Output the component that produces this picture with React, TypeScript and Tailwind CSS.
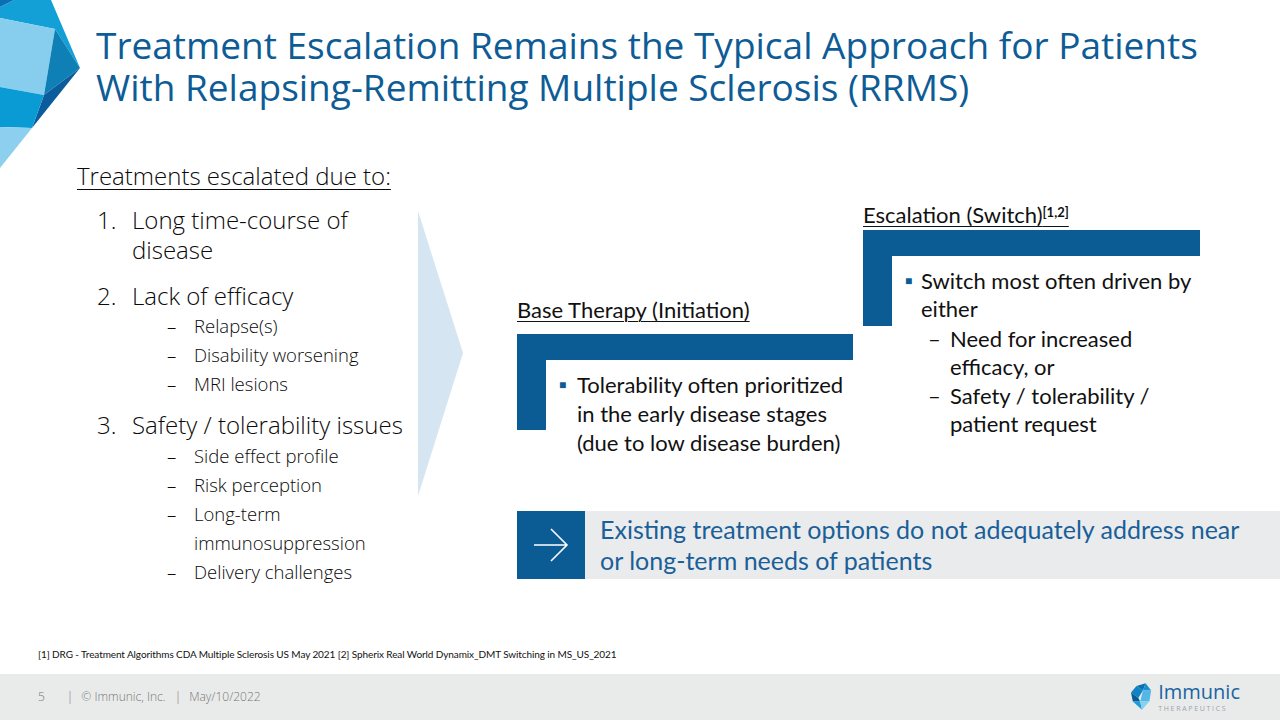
import React from "react";

const BLUE = "text-[#0e5c96]";

function CornerMark() {
  return (
    <svg className="absolute left-0 top-0" width="80" height="170" viewBox="0 0 80 170">
      <polygon points="0,7 14,0 51,0 80,68 55,29 0,18" fill="#12a0d7" />
      <polygon points="0,0 14,0 0,7" fill="#0b6fb1" />
      <polygon points="0,18 55,29 44,95 0,87" fill="#87ceee" />
      <polygon points="55,29 80,68 44,95" fill="#0f80b6" />
      <polygon points="80,68 44,95 32,128" fill="#0a5c9d" />
      <polygon points="0,87 44,95 32,128 0,127" fill="#0b9bd4" />
      <polygon points="0,127 32,128 0,168" fill="#8ccfee" />
    </svg>
  );
}

function FooterLogo() {
  return (
    <div className="flex items-center gap-[5px]">
      <svg width="22" height="30" viewBox="0 0 24 30">
        <polygon points="6,3 16,0 13,8" fill="#0b6fb0" />
        <polygon points="16,0 22,8 13,8" fill="#1a8fcf" />
        <polygon points="0,10 6,3 13,8 8,16" fill="#0f83c4" />
        <polygon points="13,8 22,8 20,20 10,20" fill="#55b7e8" />
        <polygon points="0,10 8,16 10,20 2,20" fill="#0a5a96" />
        <polygon points="2,20 10,20 12,29" fill="#1b9bd8" />
        <polygon points="10,20 20,20 12,29" fill="#86d0f0" />
      </svg>
      <div className="flex flex-col items-start">
        <span className="text-[20px] leading-[20px] text-[#1b64a3] font-['Open_Sans',sans-serif]">Immunic</span>
        <span className="mt-[3px] text-[7px] leading-[8px] tracking-[0.24em] text-[#9aa3ab] font-['Open_Sans',sans-serif]">
          THERAPEUTICS
        </span>
      </div>
    </div>
  );
}

function Sub({ children }: { children: React.ReactNode }) {
  return (
    <li className="flex">
      <span className="w-[27px] shrink-0">–</span>
      <span>{children}</span>
    </li>
  );
}

function Item({ n, mt, children }: { n: string; mt: string; children: React.ReactNode }) {
  return (
    <li className={`flex text-[24px] leading-[30px] ${mt}`}>
      <span className="w-[35px] shrink-0">{n}</span>
      <span>{children}</span>
    </li>
  );
}

function LBlock({ children, pt }: { children: React.ReactNode; pt: string }) {
  return (
    <div>
      <div className="h-[26px] bg-[#0b5b94]" />
      <div className="flex items-start">
        <div className="w-[29px] h-[70px] shrink-0 bg-[#0b5b94]" />
        <div className={`pl-[13px] ${pt}`}>{children}</div>
      </div>
    </div>
  );
}

export default function App() {
  return (
    <div className="relative w-[1280px] h-[720px] bg-white overflow-hidden flex flex-col">
      <CornerMark />

      <h1 className={`pl-[96px] pt-[24px] text-[37px] leading-[42px] ${BLUE} font-['Open_Sans',sans-serif]`}>
        Treatment Escalation Remains the Typical Approach for Patients
        <br />
        With Relapsing-Remitting Multiple Sclerosis (RRMS)
      </h1>

      <div className="flex mt-[42px]">
        {/* left: reasons */}
        <div className="w-[418px] shrink-0 pl-[77px] pt-[10px] text-[#0a0a0a] font-['Open_Sans',sans-serif] font-[350]">
          <p className="text-[24px] leading-[32px] underline underline-offset-[4px] decoration-1">
            Treatments escalated due to:
          </p>
          <ol className="pl-[20px]">
            <Item n="1." mt="mt-[13px]">
              Long time-course of
              <br />
              disease
            </Item>
            <Item n="2." mt="mt-[16px]">
              Lack of efficacy
            </Item>
            <ul className="pl-[70px] text-[18.5px] leading-[29px]">
              <Sub>Relapse(s)</Sub>
              <Sub>Disability worsening</Sub>
              <Sub>MRI lesions</Sub>
            </ul>
            <Item n="3." mt="mt-[12px]">
              Safety / tolerability issues
            </Item>
            <ul className="pl-[70px] mt-[1px] text-[18.5px] leading-[29px]">
              <Sub>Side effect profile</Sub>
              <Sub>Risk perception</Sub>
              <Sub>
                Long-term
                <br />
                immunosuppression
              </Sub>
              <Sub>Delivery challenges</Sub>
            </ul>
          </ol>
        </div>

        {/* chevron */}
        <svg className="mt-[61px] shrink-0" width="45" height="285" viewBox="0 0 45 285">
          <polygon points="0,0 45,142 0,285" fill="#d5e5f2" />
        </svg>

        {/* right: therapy stages */}
        <div className="flex-1 pl-[54px] font-['Lato',sans-serif] text-[#111]">
          <div className="flex items-start gap-[10px]">
            <div className="w-[336px] shrink-0 pt-[148px]">
              <p className="text-[22px] leading-[24px] underline underline-offset-[3px] decoration-1">
                Base Therapy (Initiation)
              </p>
              <div className="mt-[12px]">
                <LBlock pt="pt-[10px]">
                  <div className="flex text-[22px] leading-[29px]">
                    <span className="w-[18px] shrink-0 text-[#0b5b94] text-[12px]">■</span>
                    <span>
                      Tolerability often prioritized
                      <br />
                      in the early disease stages
                      <br />
                      (due to low disease burden)
                    </span>
                  </div>
                </LBlock>
              </div>
            </div>

            <div className="w-[337px] shrink-0 pt-[53px]">
              <p className="text-[22px] leading-[24px]">
                <span className="underline underline-offset-[3px] decoration-1">
                  Escalation (Switch)
                  <sup className="text-[13px] font-bold">[1,2]</sup>
                </span>
              </p>
              <div className="mt-[3px]">
                <LBlock pt="pt-[11px]">
                  <div className="text-[22px] leading-[28px]">
                    <div className="flex">
                      <span className="w-[16px] shrink-0 text-[#0b5b94] text-[12px]">■</span>
                      <span>
                        Switch most often driven by
                        <br />
                        either
                      </span>
                    </div>
                    <div className="flex pl-[23px] mt-[2px]">
                      <span className="w-[22px] shrink-0">–</span>
                      <span>
                        Need for increased
                        <br />
                        efficacy, or
                      </span>
                    </div>
                    <div className="flex pl-[23px] mt-[1px]">
                      <span className="w-[22px] shrink-0">–</span>
                      <span>
                        Safety / tolerability /
                        <br />
                        patient request
                      </span>
                    </div>
                  </div>
                </LBlock>
              </div>
            </div>
          </div>

          {/* callout */}
          <div className="mt-[54px] h-[68px] flex bg-[#e9ebec]">
            <div className="w-[68px] shrink-0 bg-[#0b5b94] flex items-center justify-center">
              <svg width="36" height="34" viewBox="0 0 36 34" fill="none" stroke="white" strokeWidth="1.6">
                <path d="M1 17 H34 M18 1 L34 17 L18 33" />
              </svg>
            </div>
            <p className="pl-[15px] self-center text-[25px] leading-[31px] text-[#1a5f98]">
              Existing treatment options do not adequately address near
              <br />
              or long-term needs of patients
            </p>
          </div>
        </div>
      </div>

      <p className="mt-auto mb-[13px] pl-[38px] text-[10px] leading-[14px] tracking-[-0.1px] text-[#111] font-['Lato',sans-serif]">
        [1] DRG - Treatment Algorithms CDA Multiple Sclerosis US May 2021 [2] Spherix Real World Dynamix_DMT Switching in MS_US_2021
      </p>

      <footer className="h-[46px] shrink-0 bg-[#e9ebeb] flex items-center justify-between pl-[38px] pr-[40px]">
        <div className="flex items-center text-[12px] text-[#767676] font-['Open_Sans',sans-serif] font-light">
          <span>5</span>
          <span className="ml-[22px]">|</span>
          <span className="ml-[8px]">© Immunic, Inc.</span>
          <span className="ml-[9px]">|</span>
          <span className="ml-[8px]">May/10/2022</span>
        </div>
        <FooterLogo />
      </footer>
    </div>
  );
}
